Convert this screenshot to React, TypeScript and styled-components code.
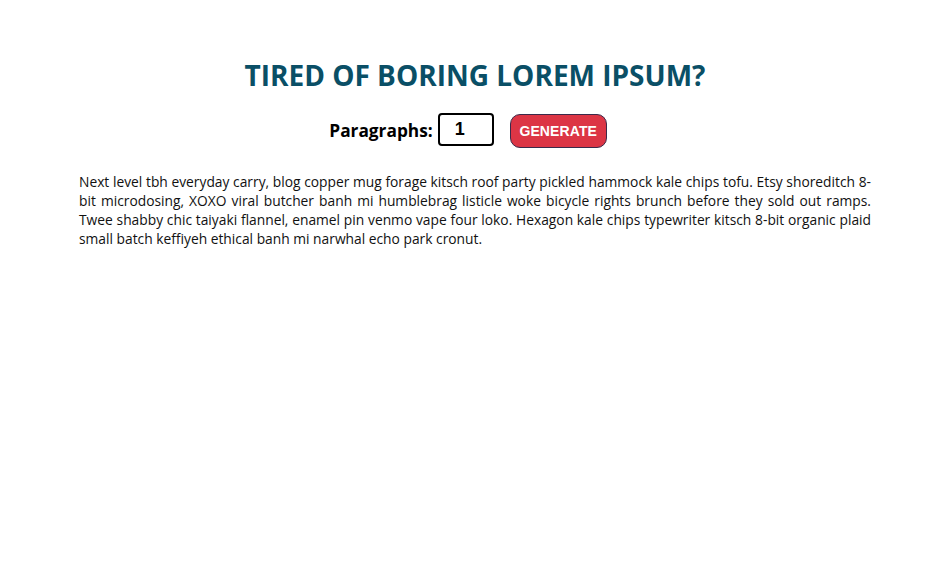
import React from "react";
import styled, { createGlobalStyle } from "styled-components";

const Global = createGlobalStyle`
  html, body { margin: 0; padding: 0; background: #fff; }
  body { font-family: "Open Sans", "Noto Sans", sans-serif; }
`;

const Page = styled.main`
  width: 792px;
  margin: 0 auto;
  padding: 56px 0 0 4px;
  display: flex;
  flex-direction: column;
  align-items: center;
`;

const Title = styled.h1`
  margin: 0;
  font-size: 28px;
  line-height: 38px;
  font-weight: 700;
  color: #0a4f66;
`;

const Form = styled.form`
  display: flex;
  align-items: flex-start;
  margin: 19px 14px 0 0;
`;

const Label = styled.label`
  align-self: center;
  font-size: 17.3px;
  font-weight: 700;
  color: #000;
`;

const NumberInput = styled.input`
  box-sizing: border-box;
  width: 56px;
  height: 33px;
  margin-left: 5px;
  border: 2px solid #000;
  border-radius: 4px;
  padding: 0 0 0 15px;
  font-family: "Liberation Sans", Arial, sans-serif;
  font-size: 18px;
  font-weight: 700;
  color: #000;
  outline: none;
`;

const Button = styled.button`
  box-sizing: border-box;
  margin: 1px 0 0 16px;
  padding: 0;
  height: 34px;
  width: 97px;
  border: 1px solid #3b2a4a;
  border-radius: 10px;
  background: #dc3545;
  color: #fff;
  font-family: "Liberation Sans", Arial, sans-serif;
  font-size: 14px;
  font-weight: 700;
  letter-spacing: 0.1px;
  cursor: pointer;
`;

const Text = styled.p`
  margin: 24px 0 0;
  width: 100%;
  font-size: 13.8px;
  line-height: 19px;
  color: #111;
  text-align: justify;
`;

export default function App() {
  return (
    <>
      <Global />
      <Page>
        <Title>TIRED OF BORING LOREM IPSUM?</Title>
        <Form onSubmit={(e) => e.preventDefault()}>
          <Label htmlFor="amount">Paragraphs:</Label>
          <NumberInput id="amount" type="text" defaultValue="1" />
          <Button type="submit">GENERATE</Button>
        </Form>
        <Text>
          Next level tbh everyday carry, blog copper mug forage kitsch roof party pickled hammock kale chips tofu. Etsy shoreditch 8-bit microdosing, XOXO viral butcher banh mi humblebrag listicle woke bicycle rights brunch before they sold out ramps. Twee shabby chic taiyaki flannel, enamel pin venmo vape four loko. Hexagon kale chips typewriter kitsch 8-bit organic plaid small batch keffiyeh ethical banh mi narwhal echo park cronut.
        </Text>
      </Page>
    </>
  );
}
